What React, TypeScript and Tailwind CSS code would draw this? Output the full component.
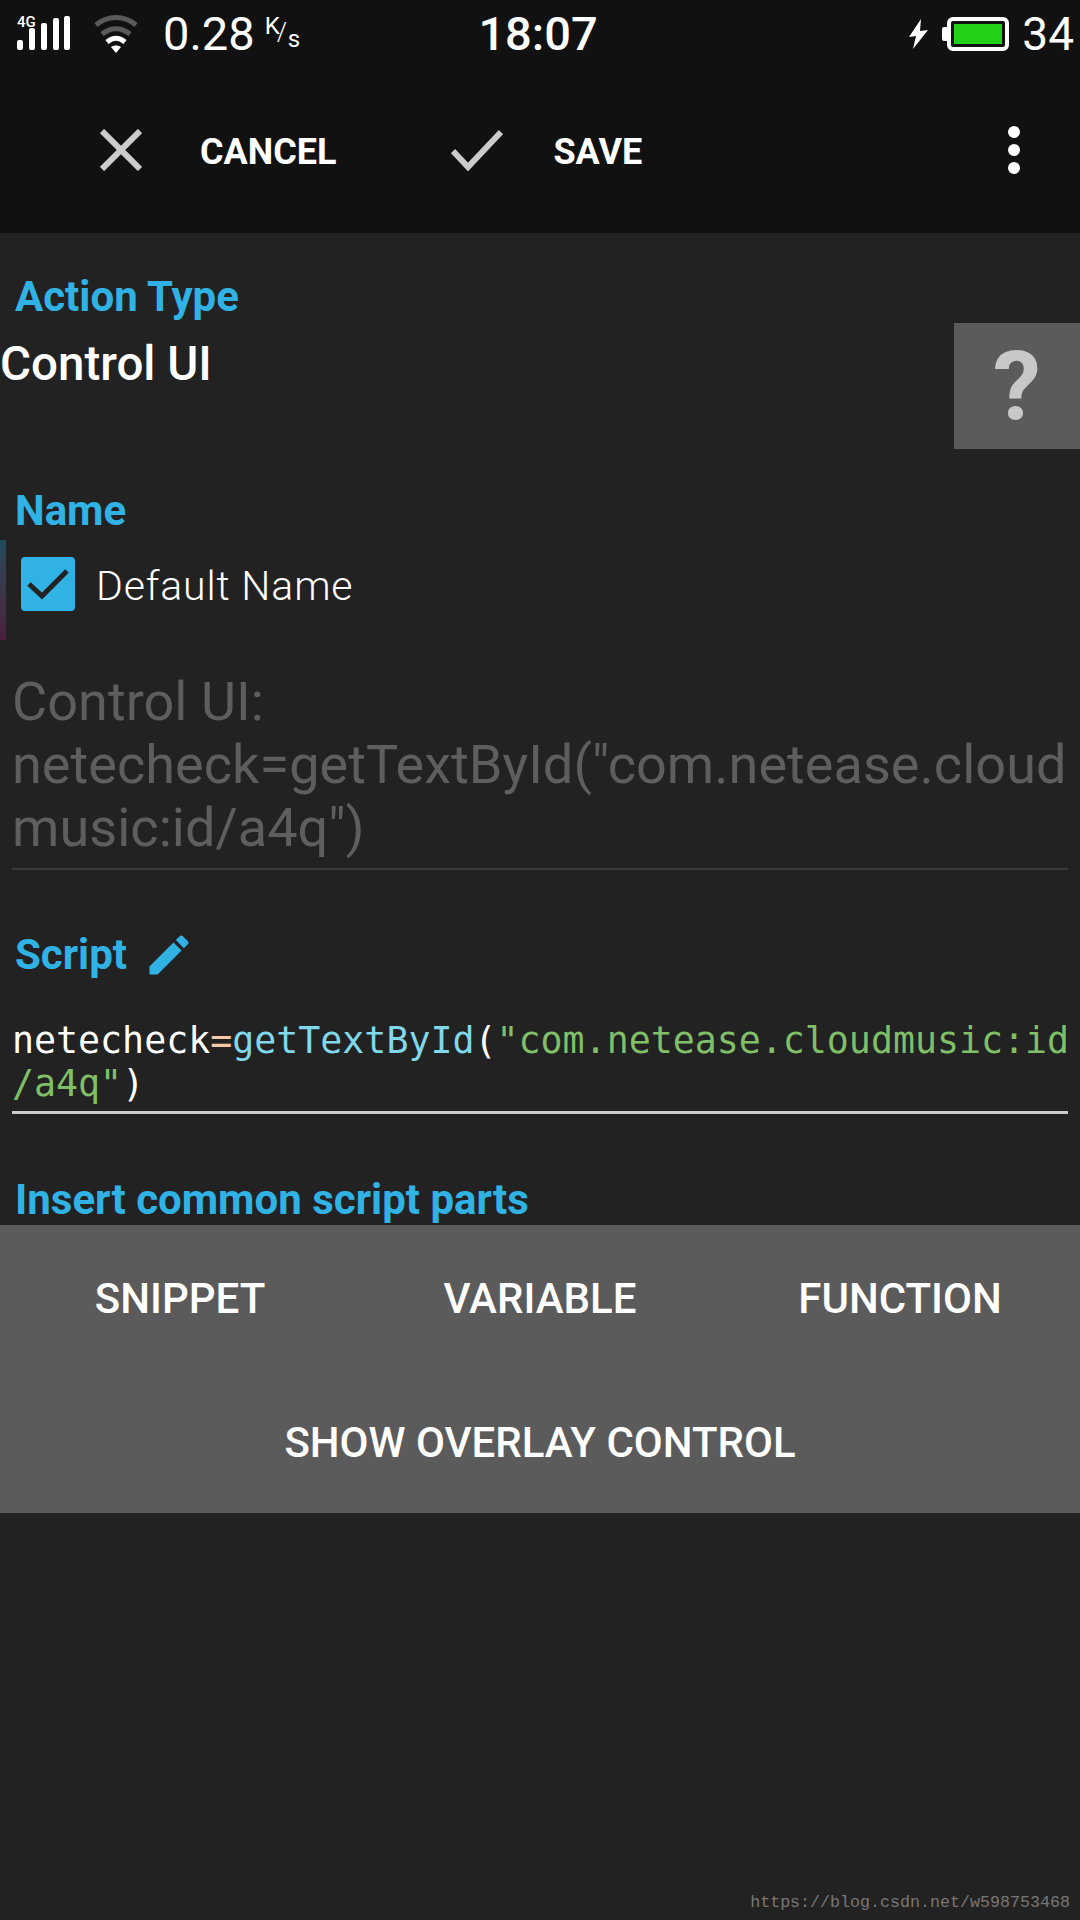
// App.tsx
import React from 'react';

const SignalIcon = () => (
  <svg width="54" height="36" viewBox="0 0 54 36" fill="#fff">
    <rect x="0" y="24" width="6" height="10" rx="2" />
    <rect x="12" y="12" width="6" height="22" rx="2" />
    <rect x="24" y="7" width="6" height="27" rx="2" />
    <rect x="36" y="2" width="6" height="32" rx="2" />
    <rect x="47" y="0" width="6" height="34" rx="2" />
  </svg>
);

const WifiIcon = () => (
  <svg width="44" height="38" viewBox="0 0 44 38" fill="none">
    <path d="M2 10 C14 0 30 0 42 10" stroke="#5a5a5a" strokeWidth="5" />
    <path d="M8 19 C17 12 27 12 36 19" stroke="#5a5a5a" strokeWidth="5" />
    <path d="M13 27 C19 22 25 22 31 27" stroke="#fff" strokeWidth="5" />
    <path d="M17 32 L22 38 L27 32 C24 30 20 30 17 32 Z" fill="#fff" />
  </svg>
);

const CloseIcon = () => (
  <svg width="42" height="42" viewBox="0 0 42 42" fill="none" stroke="#ccc" strokeWidth="6">
    <path d="M2 2 L40 40 M40 2 L2 40" />
  </svg>
);

const CheckIcon = () => (
  <svg width="52" height="42" viewBox="0 0 52 42" fill="none" stroke="#ccc" strokeWidth="6">
    <path d="M2 22 L17 38 L50 3" />
  </svg>
);

const BoltIcon = () => (
  <svg width="19" height="30" viewBox="0 0 19 30" fill="#fff">
    <path d="M12 0 L0 18 L7 17 L4 30 L19 11 L11 12 Z" />
  </svg>
);

const PencilIcon = () => (
  <svg width="52" height="52" viewBox="0 0 24 24" fill="#30b2e4">
    <path d="M3 17.25V21h3.75L17.81 9.94l-3.75-3.75L3 17.25zM20.71 7.04c.39-.39.39-1.02 0-1.41l-2.34-2.34c-.39-.39-1.02-.39-1.41 0l-1.83 1.83 3.75 3.75 1.83-1.83z" />
  </svg>
);

const Label = ({ children }: { children: React.ReactNode }) => (
  <div className="font-['Roboto',sans-serif] font-bold text-[42px] leading-[48px] text-[#30b2e4]">
    {children}
  </div>
);

function App() {
  return (
    <div className="relative flex flex-col w-[1080px] h-[1920px] bg-[#222222] font-['Roboto',sans-serif] text-white overflow-hidden">
      {/* Status bar + toolbar */}
      <div className="h-[233px] bg-[#111111] shrink-0">
        <div className="grid grid-cols-3 items-center h-[68px] px-[6px]">
          <div className="flex items-center pl-[11px]">
            <div className="relative">
              <span className="absolute left-0 top-[-2px] text-[15px] leading-[16px] font-medium">4G</span>
              <SignalIcon />
            </div>
            <div className="ml-[23px]"><WifiIcon /></div>
            <span className="ml-[25px] text-[47px] leading-[52px]">0.28</span>
            <span className="relative ml-[10px] w-[44px] h-[40px] text-[24px]">
              <span className="absolute left-0 top-[-2px] leading-[28px]">K</span>
              <span className="absolute left-[12px] top-[4px] leading-[28px] text-[26px] font-light">/</span>
              <span className="absolute left-[23px] top-[11px] leading-[28px]">s</span>
            </span>
          </div>
          <div className="text-center text-[47px] leading-[52px] font-medium pr-[4px]">18:07</div>
          <div className="flex items-center justify-end">
            <BoltIcon />
            <div className="ml-[14px] w-[5px] h-[14px] bg-white rounded-l-[2px]" />
            <div className="w-[62px] h-[34px] border-[4px] border-white rounded-[6px] p-[3px]">
              <div className="w-full h-full bg-[#22d017]" />
            </div>
            <span className="ml-[13px] text-[46px] leading-[52px]">34</span>
          </div>
        </div>
        <div className="flex items-center h-[165px]">
          <div className="ml-[100px] mb-[2px]"><CloseIcon /></div>
          <span className="ml-[58px] text-[36px] font-bold mt-[2px]">CANCEL</span>
          <div className="ml-[115px] mb-[2px]"><CheckIcon /></div>
          <span className="ml-[50px] text-[36px] font-bold mt-[2px]">SAVE</span>
          <div className="ml-auto mr-[60px] mb-[2px] flex flex-col gap-[6px]">
            <div className="w-[12px] h-[12px] rounded-full bg-white" />
            <div className="w-[12px] h-[12px] rounded-full bg-white" />
            <div className="w-[12px] h-[12px] rounded-full bg-white" />
          </div>
        </div>
      </div>

      {/* Action type */}
      <div className="pl-[15px] pt-[40px]">
        <Label>Action Type</Label>
      </div>
      <div className="flex justify-between h-[150px]">
        <span className="pt-[13px] text-[47.5px] leading-[60px] font-medium">Control UI</span>
        <div className="mt-[2px] w-[126px] h-[126px] bg-[#5b5b5b] flex items-center justify-center text-[96px] font-bold text-[#c8c8c8]">?</div>
      </div>

      {/* Name */}
      <div className="pl-[15px] mt-[16px]">
        <Label>Name</Label>
      </div>
      <div className="flex items-center pl-[21px] mt-[22px]">
        <div className="w-[54px] h-[54px] rounded-[4px] bg-[#30b2e4] flex items-center justify-center">
          <svg width="42" height="34" viewBox="0 0 42 34" fill="none" stroke="#222" strokeWidth="5">
            <path d="M2 17 L15 29 L40 4" />
          </svg>
        </div>
        <span className="ml-[21px] text-[41px] leading-[50px] font-light tracking-[0.85px] mt-[4px]">Default Name</span>
      </div>
      <div className="mx-[12px] mt-[59px] pb-[9px] border-b-2 border-[#3a3a3a] text-[54px] tracking-[0.05px] leading-[63px] font-normal text-[#5e5e5e] break-all">
        Control UI:<br />
        netecheck=getTextById("com.netease.cloud<br />
        music:id/a4q")
      </div>

      {/* Script */}
      <div className="flex items-center pl-[15px] mt-[59px]">
        <Label>Script</Label>
        <div className="ml-[16px]"><PencilIcon /></div>
      </div>
      <div className="mx-[12px] mt-[38px] pb-[6px] border-b-[3px] border-[#cccccc] font-['DejaVu_Sans_Mono',monospace] text-[36.6px] leading-[43px] text-white">
        <div>
          netecheck<span className="text-[#f5c8a8]">=</span>
          <span className="text-[#80d8ea]">getTextById</span>(
          <span className="text-[#7fbf68]">"com.netease.cloudmusic:id</span>
        </div>
        <div>
          <span className="text-[#7fbf68]">/a4q"</span>)
        </div>
      </div>

      {/* Insert */}
      <div className="pl-[15px] mt-[62px]">
        <Label>Insert common script parts</Label>
      </div>
      <div className="mt-[1px] bg-[#5b5b5b] text-[42px] font-medium">
        <div className="grid grid-cols-3 items-center h-[146px] text-center">
          <span>SNIPPET</span>
          <span>VARIABLE</span>
          <span>FUNCTION</span>
        </div>
        <div className="flex items-center justify-center h-[142px]">SHOW OVERLAY CONTROL</div>
      </div>

      {/* Left edge sliver */}
      <div className="absolute left-0 top-[540px] w-[6px] h-[100px] bg-gradient-to-b from-[#1f4a5c] to-[#4a1f3c]" />

      {/* Watermark */}
      <div className="absolute right-[10px] bottom-[7px] font-['Liberation_Mono',monospace] text-[16.67px] leading-[20px] text-[#777777]">
        https://blog.csdn.net/w598753468
      </div>
    </div>
  );
}

export default App;
